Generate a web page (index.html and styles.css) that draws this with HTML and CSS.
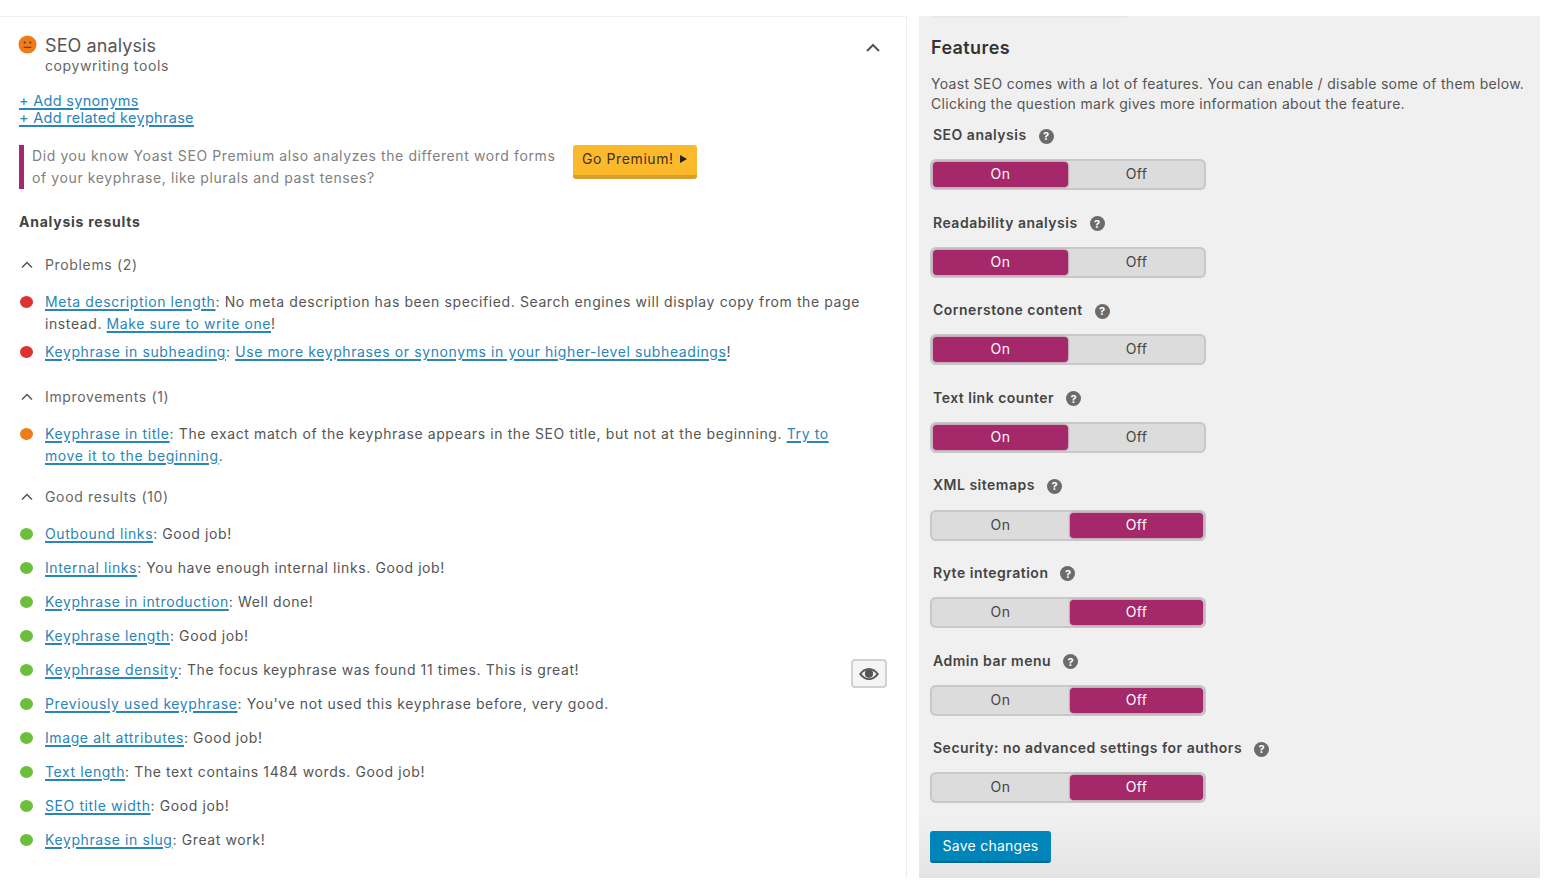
FILE: index.html
```html
<!DOCTYPE html>
<html lang="en">
<head>
<meta charset="utf-8">
<title>Yoast SEO</title>
<link rel="stylesheet" href="styles.css">
</head>
<body>
<div class="page">
  <main class="seo">
    <header class="seo-head">
      <svg class="face" viewBox="0 0 20 20"><circle cx="10" cy="10" r="9.5" fill="#ee7c1b"/><circle cx="7" cy="8" r="1.1" fill="#6b3a0c"/><circle cx="13" cy="8" r="1.1" fill="#6b3a0c"/><path d="M6 13h8" stroke="#6b3a0c" stroke-width="1.2"/></svg>
      <div class="seo-title">
        <h2>SEO analysis</h2>
        <p>copywriting tools</p>
      </div>
      <svg class="collapse" viewBox="0 0 16 10"><path d="M2 8l6-6 6 6" fill="none" stroke="#555" stroke-width="2"/></svg>
    </header>
    <div class="adds">
      <a href="#">+ Add synonyms</a>
      <a href="#">+ Add related keyphrase</a>
    </div>
    <div class="promo">
      <p>Did you know Yoast SEO Premium also analyzes the different word forms of your keyphrase, like plurals and past tenses?</p>
      <a class="premium" href="#">Go Premium! <span class="arrow"></span></a>
    </div>
    <h3 class="results-title">Analysis results</h3>

    <section class="group group-problems">
      <h4 class="group-head"><svg class="chev" viewBox="0 0 12 8"><path d="M1 6.5l5-5 5 5" fill="none" stroke="#555" stroke-width="1.5"/></svg>Problems (2)</h4>
      <ul class="list list-tight">
        <li><i class="dot red"></i><div><a href="#">Meta description length</a>: No meta description has been specified. Search engines will display copy from the page instead. <a href="#">Make sure to write one</a>!</div></li>
        <li><i class="dot red"></i><div><a href="#">Keyphrase in subheading</a>: <a href="#">Use more keyphrases or synonyms in your higher-level subheadings</a>!</div></li>
      </ul>
    </section>

    <section class="group group-improve">
      <h4 class="group-head"><svg class="chev" viewBox="0 0 12 8"><path d="M1 6.5l5-5 5 5" fill="none" stroke="#555" stroke-width="1.5"/></svg>Improvements (1)</h4>
      <ul class="list list-tight">
        <li><i class="dot orange"></i><div><a href="#">Keyphrase in title</a>: The exact match of the keyphrase appears in the SEO title, but not at the beginning. <a href="#">Try to move it to the beginning</a>.</div></li>
      </ul>
    </section>

    <section class="group group-good">
      <h4 class="group-head"><svg class="chev" viewBox="0 0 12 8"><path d="M1 6.5l5-5 5 5" fill="none" stroke="#555" stroke-width="1.5"/></svg>Good results (10)</h4>
      <ul class="list list-good">
        <li><i class="dot green"></i><div><a href="#">Outbound links</a>: Good job!</div></li>
        <li><i class="dot green"></i><div><a href="#">Internal links</a>: You have enough internal links. Good job!</div></li>
        <li><i class="dot green"></i><div><a href="#">Keyphrase in introduction</a>: Well done!</div></li>
        <li><i class="dot green"></i><div><a href="#">Keyphrase length</a>: Good job!</div></li>
        <li class="has-eye"><i class="dot green"></i><div><a href="#">Keyphrase density</a>: The focus keyphrase was found 11 times. This is great!</div>
          <button class="eye" type="button" aria-label="Highlight"><svg viewBox="0 0 22 14"><path d="M1 7c3-4 6.300-6 10-6s7 2 10 6c-3 4-6.300 6-10 6S4 11 1 7z" fill="#555"/><path d="M3.500 7c2.300-2.700 4.800-4.300 7.500-4.300s5.200 1.600 7.500 4.300c-2.300 2.700-4.800 4.300-7.500 4.300S5.800 9.700 3.500 7z" fill="#f4f4f4"/><circle cx="11" cy="6.700" r="4.100" fill="#555"/></svg></button>
        </li>
        <li><i class="dot green"></i><div><a href="#">Previously used keyphrase</a>: You've not used this keyphrase before, very good.</div></li>
        <li><i class="dot green"></i><div><a href="#">Image alt attributes</a>: Good job!</div></li>
        <li><i class="dot green"></i><div><a href="#">Text length</a>: The text contains 1484 words. Good job!</div></li>
        <li><i class="dot green"></i><div><a href="#">SEO title width</a>: Good job!</div></li>
        <li><i class="dot green"></i><div><a href="#">Keyphrase in slug</a>: Great work!</div></li>
      </ul>
    </section>
  </main>

  <aside class="features">
    <div class="tab-shadow"></div>
    <h2>Features</h2>
    <p class="intro">Yoast SEO comes with a lot of features. You can enable / disable some of them below. Clicking the question mark gives more information about the feature.</p>
    <div class="feature"><div class="label">SEO analysis <span class="help">?</span></div><div class="toggle"><span class="opt sel">On</span><span class="opt">Off</span></div></div>
    <div class="feature"><div class="label">Readability analysis <span class="help">?</span></div><div class="toggle"><span class="opt sel">On</span><span class="opt">Off</span></div></div>
    <div class="feature"><div class="label">Cornerstone content <span class="help">?</span></div><div class="toggle"><span class="opt sel">On</span><span class="opt">Off</span></div></div>
    <div class="feature"><div class="label">Text link counter <span class="help">?</span></div><div class="toggle"><span class="opt sel">On</span><span class="opt">Off</span></div></div>
    <div class="feature"><div class="label">XML sitemaps <span class="help">?</span></div><div class="toggle"><span class="opt">On</span><span class="opt sel">Off</span></div></div>
    <div class="feature"><div class="label">Ryte integration <span class="help">?</span></div><div class="toggle"><span class="opt">On</span><span class="opt sel">Off</span></div></div>
    <div class="feature"><div class="label">Admin bar menu <span class="help">?</span></div><div class="toggle"><span class="opt">On</span><span class="opt sel">Off</span></div></div>
    <div class="feature"><div class="label">Security: no advanced settings for authors <span class="help">?</span></div><div class="toggle"><span class="opt">On</span><span class="opt sel">Off</span></div></div>
    <button class="save" type="button">Save changes</button>
  </aside>
</div>
</body>
</html>
```

FILE: styles.css
```css
* { box-sizing: border-box; }
html, body { margin: 0; padding: 0; background: #fff; }
body { font-family: Inter, "Liberation Sans", sans-serif; font-size: 14px; color: #555; height: 887px; overflow: hidden; }
a { color: #2a85b8; text-decoration: underline; text-decoration-thickness: 1.5px; text-underline-offset: 2px; }
h2, h3, h4, p, ul { margin: 0; padding: 0; }
ul { list-style: none; }

.page { display: flex; align-items: flex-start; padding-top: 16px; width: 1540px; height: 878px; }

.seo { width: 907px; height: 862px; border-top: 1px solid #f0f0f0; border-right: 1px solid #ececec; padding: 19px 19px 0 19px; flex: none; }
.seo-head { display: flex; align-items: flex-start; }
.face { width: 19px; height: 19px; flex: none; margin: -1px 8px 0 -1px; }
.seo-title { flex: 1; }
.seo-title h2 { font-weight: 400; font-size: 18px; line-height: 20px; letter-spacing: .1px; color: #555; }
.seo-title p { font-size: 14px; line-height: 20px; letter-spacing: .6px; color: #666; }
.collapse { width: 16px; height: 10px; margin: 7px 6px 0 0; flex: none; }

.adds { display: flex; flex-direction: column; margin-top: 16px; font-size: 14.500px; line-height: 17px; letter-spacing: .3px; }

.promo { display: flex; align-items: flex-start; margin-top: 19px; border-left: 5px solid #a4286a; height: 44px; padding-left: 8px; }
.promo p { width: 530px; line-height: 22px; letter-spacing: .6px; color: #808080; }
.premium { display: flex; align-items: center; gap: 6px; width: 124px; height: 34px; margin-left: 11px; padding: 0 0 3px 9px; border-radius: 3px; background: #fdb92c; border-bottom: 4px solid #d8a02a; color: #3a3320; letter-spacing: .6px; text-decoration: none; }
.arrow { width: 0; height: 0; border-left: 7px solid #222; border-top: 4px solid transparent; border-bottom: 4px solid transparent; }

.results-title { margin-top: 23px; font-size: 14px; line-height: 20px; font-weight: 700; letter-spacing: .75px; color: #444; }

.group-head { display: flex; align-items: center; font-weight: 400; font-size: 14px; line-height: 20px; letter-spacing: .65px; color: #666; }
.chev { width: 12px; height: 8px; margin: 0 12px 0 2px; flex: none; }
.group-problems { margin-top: 23px; }
.group-improve { margin-top: 24px; }
.group-good { margin-top: 20px; }

.list { margin-top: 16px; }
.list li { display: flex; line-height: 22px; letter-spacing: .6px; color: #555; }
.list-tight li + li { margin-top: 6px; }
.list-good li { height: 22px; margin-top: 12px; position: relative; }
.list-good li:first-child { margin-top: 0; }
.list > li > div { width: 820px; }

.dot { width: 13px; height: 12px; border-radius: 50%; margin: 5px 12px 0 1px; flex: none; }
.red { background: #dc3232; }
.orange { background: #ee7c1b; }
.green { background: #6bbf3a; }

.eye { position: absolute; right: 0; top: 0; width: 36px; height: 29px; padding: 0; display: flex; align-items: center; justify-content: center; background: #f5f5f5; border: 2px solid #d2d2d2; border-radius: 4px; }
.eye svg { width: 22px; height: 14px; }

.features { position: relative; width: 621px; height: 862px; margin-left: 12px; flex: none; background: linear-gradient(#f0f0f0 93%, #e4e4e4); padding: 21px 12px 0; }
.tab-shadow { position: absolute; left: 12px; top: 0; width: 196px; height: 3px; background: linear-gradient(#e6e6e6, #f0f0f0); }
.features h2 { font-size: 18px; line-height: 22px; font-weight: 600; letter-spacing: .4px; color: #333; }
.intro { margin-top: 15px; line-height: 20px; letter-spacing: .3px; color: #555; }
.feature { height: 87.600px; padding-left: 2px; }
.intro + .feature { margin-top: 10px; }
.label { display: flex; align-items: center; gap: 12px; height: 21px; font-weight: 600; letter-spacing: .5px; color: #444; }
.help { display: inline-flex; width: 15px; height: 15px; border-radius: 50%; background: #6b6b6b; color: #fff; font-size: 11px; font-weight: 700; letter-spacing: 0; align-items: center; justify-content: center; margin-top: 3px; }
.toggle { display: grid; grid-template-columns: 135px 133px; gap: 2px; margin: 14.300px 0 0 -3px; width: 276px; height: 31px; padding: 3px; border-radius: 6px; background: #dcdcdc; box-shadow: inset 0 0 0 2px #c8c8c8; letter-spacing: .4px; }
.opt { display: flex; align-items: center; justify-content: center; border-radius: 4px; padding-bottom: 2px; color: #444; }
.sel { background: #a4286a; color: #fff; box-shadow: 0 0 2px #8a2259; }
.save { display: block; width: 121px; height: 32px; margin: 6px 0 0 -1px; padding: 0 0 1px; background: #0085ba; border: 0; border-bottom: 2px solid #006a95; border-radius: 3px; color: #fff; font: 14px Inter, sans-serif; letter-spacing: .25px; }
```
